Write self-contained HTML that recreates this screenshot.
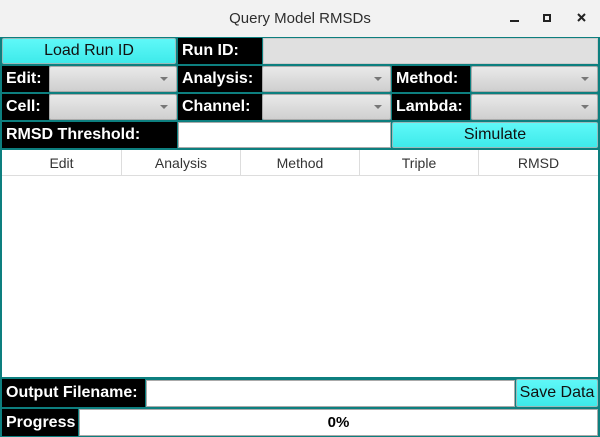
<html><head><style>
body{margin:0;width:600px;height:437px;overflow:hidden;background:#f2f2f2;font-family:"Liberation Sans",sans-serif}
.a{position:absolute;box-sizing:border-box;display:flex;align-items:center}
.lb{background:#000;color:#fff;font-weight:bold;font-size:16px;padding-left:4px}
.btn{background:linear-gradient(#5ff8f8,#3eeaea);border:1px solid #9bb;border-radius:2px;justify-content:center;font-size:16px;color:#111}
.cb{background:linear-gradient(#e9e9e9,#cfcfcf);border:1px solid #aaa;border-radius:2px;justify-content:flex-end;padding-right:8px}
.cb:after{content:"";border-left:4px solid transparent;border-right:4px solid transparent;border-top:4px solid #777}
.in{background:#fff;border:1px solid #aaa}
.th{font-size:14px;color:#333;justify-content:center;border-right:1px solid #ddd;height:25px;top:150px}
</style></head><body>
<div class="a" style="left:0;top:0;width:600px;height:37px;justify-content:center;font-size:15px;color:#2e2e2e;background:#f2f2f2">Query Model RMSDs</div>
<div class="a" style="left:510px;top:20px;width:9px;height:2px;background:#222"></div>
<div class="a" style="left:543px;top:14px;width:8px;height:8px;border:2px solid #222"></div>
<svg style="position:absolute;left:577px;top:13px" width="9" height="9"><path d="M1 1L8 8M8 1L1 8" stroke="#222" stroke-width="2"/></svg>
<div class="a" style="left:0;top:37px;width:600px;height:400px;background:#0d7f7f"></div>
<div class="a btn" style="left:2px;top:38px;width:174px;height:26px">Load Run ID</div>
<div class="a lb" style="left:178px;top:38px;width:84px;height:26px">Run ID:</div>
<div class="a" style="left:263px;top:38px;width:335px;height:26px;background:#e0e0e0;border:1px solid #ccc"></div>
<div class="a lb" style="left:2px;top:66px;width:47px;height:26px">Edit:</div>
<div class="a cb" style="left:49px;top:66px;width:128px;height:26px"></div>
<div class="a lb" style="left:178px;top:66px;width:84px;height:26px">Analysis:</div>
<div class="a cb" style="left:262px;top:66px;width:129px;height:26px"></div>
<div class="a lb" style="left:392px;top:66px;width:78px;height:26px">Method:</div>
<div class="a cb" style="left:471px;top:66px;width:127px;height:26px"></div>
<div class="a lb" style="left:2px;top:94px;width:47px;height:26px">Cell:</div>
<div class="a cb" style="left:49px;top:94px;width:128px;height:26px"></div>
<div class="a lb" style="left:178px;top:94px;width:84px;height:26px">Channel:</div>
<div class="a cb" style="left:262px;top:94px;width:129px;height:26px"></div>
<div class="a lb" style="left:392px;top:94px;width:78px;height:26px">Lambda:</div>
<div class="a cb" style="left:471px;top:94px;width:127px;height:26px"></div>
<div class="a lb" style="left:2px;top:122px;width:175px;height:26px">RMSD Threshold:</div>
<div class="a in" style="left:178px;top:122px;width:213px;height:26px"></div>
<div class="a btn" style="left:392px;top:122px;width:206px;height:26px">Simulate</div>
<div class="a" style="left:2px;top:150px;width:596px;height:227px;background:#fff"></div>
<div class="a" style="left:2px;top:175px;width:596px;height:1px;background:#ddd"></div>
<div class="a th" style="left:2px;width:120px">Edit</div>
<div class="a th" style="left:122px;width:119px">Analysis</div>
<div class="a th" style="left:241px;width:119px">Method</div>
<div class="a th" style="left:360px;width:119px">Triple</div>
<div class="a th" style="left:479px;width:119px;border:0">RMSD</div>
<div class="a lb" style="left:2px;top:379px;width:143px;height:28px">Output Filename:</div>
<div class="a in" style="left:146px;top:380px;width:369px;height:27px"></div>
<div class="a btn" style="left:516px;top:379px;width:82px;height:28px">Save Data</div>
<div class="a lb" style="left:2px;top:409px;width:76px;height:27px">Progress</div>
<div class="a in" style="left:79px;top:409px;width:519px;height:27px;justify-content:center;font-weight:bold;font-size:15px">0%</div>
</body></html>
